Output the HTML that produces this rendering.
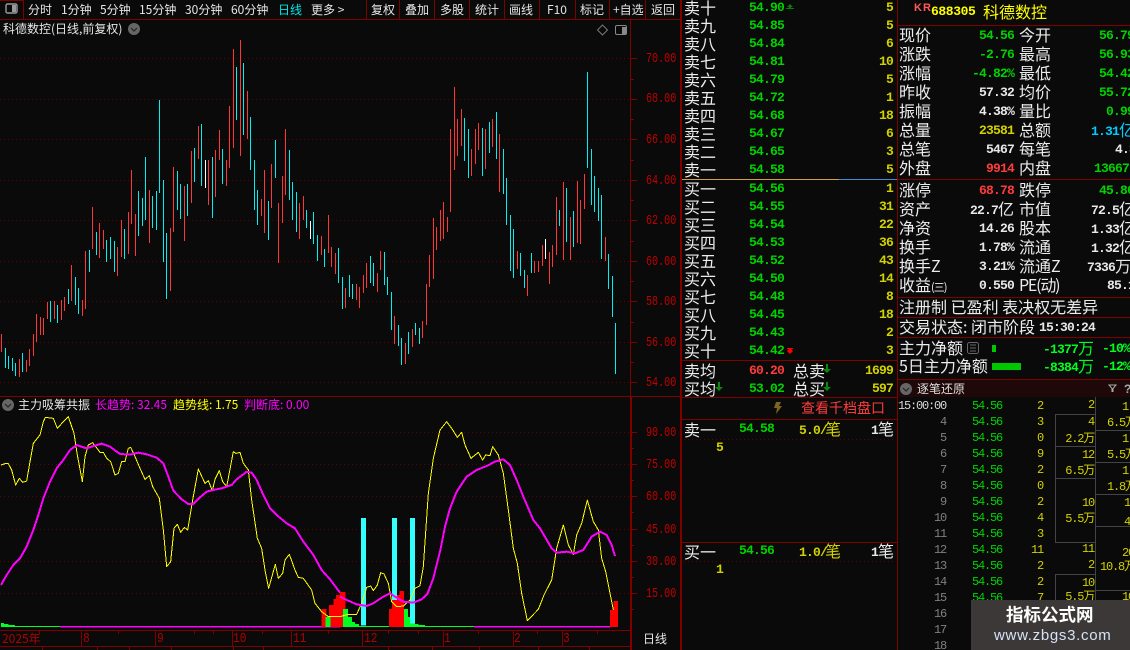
<!DOCTYPE html>
<html><head><meta charset="utf-8"><style>
html,body{margin:0;padding:0;background:#0a0a0a;width:1130px;height:650px;overflow:hidden}
#p{position:relative;width:1130px;height:650px;overflow:hidden;background:#0a0a0a;font-family:"WenQuanYi Zen Hei","Noto Sans CJK SC",sans-serif;color:#e8e8e8}
#p>svg{position:absolute;left:0;top:0}
.a{position:absolute;white-space:nowrap}
.tb{position:absolute;top:2px;font-size:12px;line-height:16px;color:#e6e6e6;white-space:nowrap}
.ax{position:absolute;left:646px;font:14px/14px "Liberation Mono",monospace;transform:scaleX(.72);transform-origin:left;color:#c00000}
.dt{position:absolute;top:632px;font:14px/15px "Liberation Mono",monospace;transform:scaleX(.8);transform-origin:left;color:#b00000}
.col{position:absolute;white-space:nowrap}
.l16{font-size:16px;line-height:18px;color:#ececec;margin-top:-1px}
.num{font:bold 13px/18px "Liberation Mono",monospace;letter-spacing:-.8px}
.c{position:absolute;font-size:16px;line-height:19px;color:#ececec;white-space:nowrap;margin-top:-1px}
.v{position:absolute;font:bold 13px/19px "Liberation Mono","WenQuanYi Zen Hei",monospace;letter-spacing:-.8px;color:#e8e8e8;white-space:nowrap}
.z{font:16px/16px "WenQuanYi Zen Hei","Noto Sans CJK SC",sans-serif;letter-spacing:0;vertical-align:-1px}
.g{color:#00d200}.y{color:#d2d200}.r{color:#ff3c3c}.w{color:#e8e8e8}.b{color:#00ccff}
.m{position:absolute;font:12px/16px "Liberation Mono","WenQuanYi Zen Hei",monospace;letter-spacing:-1.2px;white-space:nowrap;color:#d2d200}
</style></head><body><div id="p">
<svg width="1130" height="650" shape-rendering="crispEdges">
<!-- toolbar -->
<g fill="none" stroke="#800000">
<path d="M0 19.5H680M23.5 0V19M366.5 0V19M399.5 0V19M434.5 0V19M469.5 0V19M504.5 0V19M539.5 0V19M575.5 0V19M609.5 0V19M645.5 0V19"/>
<path d="M0 .5H23"/>
<path d="M0 396.5H680M630.5 19V650M631.5 396V650M0 630.5H630M0 646.5H630"/>
<path d="M632 396.5H680M680.5 0V650M681.5 0V650M897.5 0V650M682 360.5H897M682 397.5H897M682 419.5H897M682 542.5H897M898 25.5H1130M898 179.5H1130M898 297.5H1130M898 317.5H1130M898 337.5H1130M898 379.5H1130"/>
<path d="M631 58.5H637M631 99.5H637M631 139.5H637M631 180.5H637M631 220.5H637M631 261.5H637M631 301.5H637M631 342.5H637M631 382.5H637M631 79.5H634M631 119.5H634M631 160.5H634M631 200.5H634M631 241.5H634M631 281.5H634M631 322.5H634M631 362.5H634"/>
<path d="M631 432.5H637M631 464.5H637M631 496.5H637M631 529.5H637M631 561.5H637M631 593.5H637M631 448.5H634M631 480.5H634M631 512.5H634M631 545.5H634M631 577.5H634M631 609.5H634"/>
<path d="M81.5 630V646M155.5 630V646M232.5 630V646M291.5 630V646M362.5 630V646M443.5 630V646M513.5 630V646M562.5 630V646M39.5 630V634M118.5 630V634M194.5 630V634M213.5 630V634M262.5 630V634M328.5 630V634M388.5 630V634M418.5 630V634M478.5 630V634M537.5 630V634M597.5 630V634M42.5 646V650M97.5 646V650M129.5 646V650M171.5 646V650M233.5 646V650M263.5 646V650M388.5 646V650M432.5 646V650M479.5 646V650M538.5 646V650M589.5 646V650"/>
</g>
<rect x="898" y="380" width="232" height="17" fill="#1e0808"/>
<!-- grid -->
<g stroke="#620000" stroke-dasharray="1 3" fill="none">
<path d="M0 58.5H630M0 99.5H630M0 139.5H630M0 180.5H630M0 220.5H630M0 261.5H630M0 301.5H630M0 342.5H630M0 382.5H630"/>
<path d="M0 432.5H630M0 464.5H630M0 496.5H630M0 529.5H630M0 561.5H630M0 593.5H630"/>
<path d="M684 439.5H895M684 561.5H895"/>
</g>
<!-- candles -->
<path fill="none" stroke="#ff3636" d="M1.5 334V352M19.5 359V377M26.5 360V372M29.5 349V366M33.5 334V356M36.5 314V342M40.5 317V335M43.5 318V335M47.5 302V319M54.5 301V319M61.5 300V320M64.5 297V311M71.5 265V301M82.5 300V316M85.5 251V309M92.5 207V249M99.5 223V258M103.5 230V249M117.5 247V276M121.5 220V257M128.5 212V254M131.5 170V224M135.5 214V256M149.5 190V243M170.5 228V291M173.5 167V232M184.5 186V241M191.5 151V203M198.5 126V159M208.5 160V205M215.5 150V197M219.5 130V160M226.5 160V186M229.5 106V168M233.5 49V148M240.5 40V156M247.5 91V139M261.5 199V216M264.5 170V233M271.5 164V208M278.5 203V263M282.5 176V223M285.5 129V195M299.5 203V239M303.5 196V220M321.5 236V255M328.5 215V253M331.5 247V267M335.5 253V274M345.5 288V308M356.5 284V300M359.5 287V308M363.5 275V293M366.5 263V288M377.5 273V292M380.5 251V270M394.5 316V344M405.5 343V364M412.5 329V347M422.5 321V338M426.5 284V325M429.5 255V287M433.5 218V279M436.5 227V250M440.5 210V241M443.5 202V239M447.5 217V232M450.5 129V212M454.5 87V170M457.5 119V156M461.5 109V146M471.5 149V176M475.5 129V164M478.5 123V150M485.5 129V169M492.5 119V147M499.5 134V192M517.5 251V269M527.5 275V296M534.5 261V273M538.5 261V272M542.5 245V266M549.5 252V284M552.5 245V267M556.5 197V255M563.5 182V260M570.5 217V260M577.5 181V243M580.5 200V244M584.5 174V209M605.5 237V261"/>
<path fill="none" stroke="#00f0f0" d="M5.5 348V368M8.5 356V369M12.5 358V371M15.5 363V376M22.5 353V372M50.5 301V322M57.5 305V323M68.5 289V304M75.5 277V305M78.5 288V314M89.5 250V272M96.5 232V255M106.5 240V262M110.5 237V259M114.5 241V272M124.5 229V259M138.5 191V236M142.5 198V226M145.5 157V220M152.5 196V228M156.5 191V230M159.5 100V193M163.5 180V262M166.5 233V299M177.5 171V210M180.5 184V219M187.5 184V216M194.5 148V182M201.5 124V186M212.5 157V218M222.5 149V184M236.5 67V120M243.5 63V135M250.5 117V170M254.5 160V210M257.5 190V225M268.5 201V240M275.5 140V178M289.5 150V200M292.5 182V220M296.5 192V232M306.5 210V228M313.5 212V244M317.5 235V261M324.5 249V267M338.5 248V283M342.5 277V309M349.5 275V297M352.5 284V299M370.5 256V283M373.5 263V286M384.5 252V285M387.5 277V295M391.5 292V330M398.5 325V346M401.5 338V365M408.5 332V354M415.5 323V335M419.5 328V344M464.5 118V161M468.5 129V178M482.5 128V176M489.5 122V153M496.5 112V159M503.5 149V194M506.5 178V225M510.5 215V271M513.5 229V278M520.5 253V276M524.5 270V288M531.5 253V273M559.5 210V226M566.5 188V242M573.5 211V247M587.5 72V168M591.5 149V205M594.5 176V212M598.5 188V221M601.5 195V259M608.5 254V289M612.5 276V317M615.5 323V374"/>
<path fill="none" stroke="#fff" d="M205.5 160V188M310.5 221V239M545.5 239V259"/>
<!-- lower bars -->
<g transform="translate(0,420) scale(.33333)">
<rect x="3" y="609" width="9" height="12" fill="#00ff20"/><rect x="12" y="612" width="13" height="9" fill="#00ff20"/><rect x="25" y="615" width="20" height="6" fill="#00ff20"/><rect x="45" y="618" width="135" height="3" fill="#00ff20"/>
<rect x="180" y="618" width="840" height="4" fill="#ff00ff"/>
<rect x="965" y="567" width="15" height="54" fill="#f00"/><rect x="987" y="555" width="13" height="66" fill="#f00"/><rect x="1000" y="537" width="8" height="84" fill="#f00"/><rect x="1008" y="525" width="12" height="96" fill="#f00"/><rect x="977" y="591" width="15" height="30" fill="#00ff20"/>
</g>
<g transform="translate(340,420) scale(.33333)">
<rect x="0" y="618" width="402" height="3" fill="#00ff20"/><rect x="402" y="618" width="408" height="4" fill="#ff00ff"/>
<rect x="0" y="516" width="16" height="105" fill="#f00"/>
<rect x="9" y="567" width="15" height="54" fill="#00ff20"/><rect x="24" y="591" width="12" height="30" fill="#00ff20"/><rect x="36" y="606" width="9" height="15" fill="#00ff20"/><rect x="45" y="612" width="12" height="9" fill="#00ff20"/>
<rect x="190" y="567" width="14" height="54" fill="#00ff20"/><rect x="204" y="591" width="10" height="30" fill="#00ff20"/><rect x="214" y="603" width="11" height="18" fill="#00ff20"/><rect x="225" y="612" width="11" height="9" fill="#00ff20"/><rect x="236" y="615" width="19" height="6" fill="#00ff20"/>
<rect x="147" y="567" width="11" height="54" fill="#f00"/><rect x="156" y="540" width="12" height="81" fill="#f00"/><rect x="168" y="525" width="10" height="96" fill="#f00"/><rect x="178" y="513" width="14" height="108" fill="#f00"/>
<rect x="810" y="570" width="10" height="51" fill="#f00"/><rect x="820" y="543" width="14" height="78" fill="#f00"/>
<rect x="63" y="294" width="15" height="322" fill="#33ffff"/><rect x="156" y="294" width="15" height="246" fill="#33ffff"/><rect x="210" y="294" width="15" height="316" fill="#33ffff"/>
</g>
<g fill="none" stroke-linejoin="round">
<g transform="translate(0,420) scale(.33333)">
<polyline stroke="#ffff00" stroke-width="3" points="3,135 15,131 25,131 35,150 47,195 58,175 68,187 80,183 90,125 100,70 120,45 130,5 136,-8 160,-5 172,25 190,5 205,-10 222,40 232,105 247,185 255,110 265,75 278,68 300,97 310,97 320,115 332,125 345,165 355,160 365,125 375,125 385,85 392,82 403,105 420,145 435,178 448,167 458,200 478,235 490,330 500,440 512,425 522,325 532,313 542,337 553,322 563,330 578,240 595,147 615,190 625,182 637,212 645,178 658,152 668,185 680,200 700,95 708,100 720,97 730,130 745,150 755,240 772,355 785,385 795,450 806,505 826,433 835,475 848,460 855,420 868,403 885,450 895,472 910,475 935,510 945,550 965,575 985,590 1020,590"/>
<polyline stroke="#ff00ff" stroke-width="6" points="3,495 20,465 40,435 60,415 80,380 100,330 115,285 130,235 150,185 170,145 190,120 210,90 230,75 260,85 280,78 305,71 330,80 360,102 390,104 415,98 440,103 470,113 490,130 505,170 520,212 545,238 565,252 580,252 600,232 620,215 640,210 665,205 695,195 710,178 740,155 755,158 770,180 790,225 810,265 830,285 860,310 885,325 910,365 940,405 965,450 990,478 1020,518"/>
</g>
<g transform="translate(340,420) scale(.33333)">
<polyline stroke="#ffff00" stroke-width="3" points="0,590 25,583 50,583 65,550 80,502 92,498 100,512 112,495 122,458 132,462 145,490 155,545 170,560 190,558 210,540 225,505 240,497 250,440 265,220 280,115 300,30 320,5 335,25 352,52 365,37 375,75 393,115 415,97 428,120 437,105 450,107 458,80 475,105 490,160 505,270 520,385 532,430 545,520 562,602 595,568 612,525 635,480 650,385 670,315 685,375 700,403 710,345 725,310 742,240 760,305 775,330 785,415 797,455 820,570"/>
<polyline stroke="#ff00ff" stroke-width="6" points="0,530 20,540 50,553 80,558 100,550 130,530 150,520 165,530 190,545 220,548 245,538 262,522 280,475 300,395 315,320 330,265 350,215 380,170 410,150 440,138 465,125 490,118 510,135 530,180 550,230 580,300 600,325 635,385 650,398 680,395 705,400 730,390 755,350 780,335 800,345 815,375 825,408"/>
</g>
</g>
<!-- icons -->
<rect x="6" y="4" width="11" height="9" rx="1.5" fill="none" stroke="#999" stroke-width="1.4" shape-rendering="auto"/><rect x="12" y="5" width="4" height="7" fill="#999"/>
<rect x="615.5" y="25.5" width="11" height="9" rx="1.5" fill="none" stroke="#888" shape-rendering="auto"/><rect x="622" y="27" width="4" height="7" fill="#888"/>
<path d="M602.5 25L607.5 30L602.5 35L597.5 30Z" fill="none" stroke="#777" shape-rendering="auto"/>
<g shape-rendering="auto">
<circle cx="134" cy="29" r="6" fill="#666"/><path d="M131 28l3 3 3-3" fill="none" stroke="#222" stroke-width="1.2"/>
<circle cx="8" cy="405" r="6" fill="#666"/><path d="M5 404l3 3 3-3" fill="none" stroke="#222" stroke-width="1.2"/>
<circle cx="906" cy="389" r="6" fill="#666"/><path d="M903 388l3 3 3-3" fill="none" stroke="#222" stroke-width="1.2"/>
<path d="M776 402h5l-2 4h3l-6 8 1-6h-3z" fill="#7a6620"/>
<path d="M787 7l3-3 3 3h-2v1h3v1h-8v-1h3v-1zM786 9h8" fill="#0a7a0a"/>
<path d="M787 348h6v1h-2l2 2-3 3-3-3 2-2h-2z" fill="#f00"/>
<path d="M826 364v5h-3l4 4 4-4h-3v-5zM826 382v5h-3l4 4 4-4h-3v-5zM718 382v5h-3l4 4 4-4h-3v-5z" fill="#0a8a0a"/>
<path d="M1109 385h7l-3 3.500v3h-1v-3z" fill="none" stroke="#aaa"/>
<rect x="967.5" y="342.5" width="11" height="11" rx="2" fill="none" stroke="#666"/><path d="M970 345h6M970 348h6M970 351h6" stroke="#666"/>
</g>
<rect x="992" y="345" width="4" height="7" fill="#00c800"/>
<rect x="992" y="363" width="29" height="7" fill="#00c800"/>
<path d="M682 179.5H839" stroke="#d0a040"/><path d="M839 179.5H897" stroke="#4488cc"/>
<!-- tick table lines -->
<g fill="none" stroke="#444">
<path d="M1095.5 397V600M1055 414.5H1095M1055 446.5H1095M1055 478.5H1095M1055 542.5H1095M1055 574.5H1095M1055.5 414V542M1055.5 574V600M1095 430.5H1130M1095 462.5H1130M1095 494.5H1130M1095 526.5H1130M1095 590.5H1130"/>
</g>
</svg>

<!-- toolbar text -->
<span class="tb" style="left:28px">分时</span><span class="tb" style="left:61px">1分钟</span><span class="tb" style="left:100px">5分钟</span><span class="tb" style="left:139px">15分钟</span><span class="tb" style="left:185px">30分钟</span><span class="tb" style="left:231px">60分钟</span><span class="tb" style="left:278px;color:#00e6e6">日线</span><span class="tb" style="left:311px">更多 &gt;</span>
<span class="tb" style="left:371px">复权</span><span class="tb" style="left:405px">叠加</span><span class="tb" style="left:440px">多股</span><span class="tb" style="left:475px">统计</span><span class="tb" style="left:509px">画线</span><span class="tb" style="left:547px">F10</span><span class="tb" style="left:580px">标记</span><span class="tb" style="left:613px">+自选</span><span class="tb" style="left:651px">返回</span>
<span class="tb" style="left:3px;top:21px">科德数控(日线,前复权)</span>

<span class="ax" style="top:52px">70.00</span><span class="ax" style="top:92px">68.00</span><span class="ax" style="top:133px">66.00</span><span class="ax" style="top:174px">64.00</span><span class="ax" style="top:214px">62.00</span><span class="ax" style="top:255px">60.00</span><span class="ax" style="top:295px">58.00</span><span class="ax" style="top:336px">56.00</span><span class="ax" style="top:376px">54.00</span>
<span class="ax" style="top:426px">90.00</span><span class="ax" style="top:458px">75.00</span><span class="ax" style="top:490px">60.00</span><span class="ax" style="top:523px">45.00</span><span class="ax" style="top:555px">30.00</span><span class="ax" style="top:587px">15.00</span>

<span class="tb" style="left:18px;top:397px">主力吸筹共振</span>
<span class="tb" style="left:95px;top:397px;color:#ff00ff">长趋势: 32.45</span>
<span class="tb" style="left:173px;top:397px;color:#ffff00">趋势线: 1.75</span>
<span class="tb" style="left:244px;top:397px;color:#ff00ff">判断底: 0.00</span>

<span class="tb" style="left:2px;top:631px;color:#b00000">2025年</span>
<span class="dt" style="left:83px">8</span><span class="dt" style="left:157px">9</span><span class="dt" style="left:233px">10</span><span class="dt" style="left:293px">11</span><span class="dt" style="left:364px">12</span><span class="dt" style="left:444px">1</span><span class="dt" style="left:514px">2</span><span class="dt" style="left:563px">3</span>
<span class="tb" style="left:643px;top:631px">日线</span>

<!-- order book -->
<div class="col l16" style="left:684px;top:-1px">卖十<br>卖九<br>卖八<br>卖七<br>卖六<br>卖五<br>卖四<br>卖三<br>卖二<br>卖一</div>
<div class="col num g" style="left:749px;top:-1px">54.90<br>54.85<br>54.84<br>54.81<br>54.79<br>54.72<br>54.68<br>54.67<br>54.65<br>54.58</div>
<div class="col num y" style="right:237px;top:-1px;text-align:right">5<br>5<br>6<br>10<br>5<br>1<br>18<br>6<br>3<br>5</div>
<div class="col l16" style="left:684px;top:180px">买一<br>买二<br>买三<br>买四<br>买五<br>买六<br>买七<br>买八<br>买九<br>买十</div>
<div class="col num g" style="left:749px;top:180px">54.56<br>54.55<br>54.54<br>54.53<br>54.52<br>54.50<br>54.48<br>54.45<br>54.43<br>54.42</div>
<div class="col num y" style="right:237px;top:180px;text-align:right">1<br>31<br>22<br>36<br>43<br>14<br>8<br>18<br>2<br>3</div>
<div class="col l16" style="left:684px;top:362px">卖均<br>买均</div>
<div class="col num" style="left:749px;top:362px"><span class="r">60.20</span><br><span class="g">53.02</span></div>
<div class="col l16" style="left:793px;top:362px">总卖<br>总买</div>
<div class="col num y" style="right:237px;top:362px;text-align:right">1699<br>597</div>
<span class="a" style="left:801px;top:400px;font-size:14px;line-height:17px;color:#ff3c3c">查看千档盘口</span>

<span class="a l16" style="left:684px;top:421px">卖一</span>
<span class="a num g" style="left:739px;top:420px">54.58</span>
<span class="a num y" style="left:799px;top:420px">5.0/<span class="z" style="margin-left:-2px">笔</span></span>
<span class="a num w" style="left:871px;top:420px">1<span class="z">笔</span></span>
<span class="a num y" style="left:716px;top:439px">5</span>
<span class="a l16" style="left:684px;top:543px">买一</span>
<span class="a num g" style="left:739px;top:542px">54.56</span>
<span class="a num y" style="left:799px;top:542px">1.0/<span class="z" style="margin-left:-2px">笔</span></span>
<span class="a num w" style="left:871px;top:542px">1<span class="z">笔</span></span>
<span class="a num y" style="left:716px;top:561px">1</span>

<!-- header -->
<span class="a" style="left:914px;top:1px;font:bold 11px/14px 'Liberation Sans',sans-serif;color:#ff5a5a;letter-spacing:1px">KR</span>
<span class="a num" style="left:931px;top:3px;color:#ffff00;letter-spacing:-.4px">688305</span>
<span class="a" style="left:983px;top:2px;font-size:16px;line-height:18px;color:#ffff00">科德数控</span>

<!-- stats -->
<span class="c" style="left:899px;top:26px">现价</span><span class="v g" style="right:116px;top:26px">54.56</span><span class="c" style="left:1019px;top:26px">今开</span><span class="v g" style="right:-4px;top:26px">56.79</span>
<span class="c" style="left:899px;top:45px">涨跌</span><span class="v g" style="right:116px;top:45px">-2.76</span><span class="c" style="left:1019px;top:45px">最高</span><span class="v g" style="right:-4px;top:45px">56.93</span>
<span class="c" style="left:899px;top:64px">涨幅</span><span class="v g" style="right:116px;top:64px">-4.82%</span><span class="c" style="left:1019px;top:64px">最低</span><span class="v g" style="right:-4px;top:64px">54.42</span>
<span class="c" style="left:899px;top:83px">昨收</span><span class="v" style="right:116px;top:83px">57.32</span><span class="c" style="left:1019px;top:83px">均价</span><span class="v g" style="right:-4px;top:83px">55.72</span>
<span class="c" style="left:899px;top:102px">振幅</span><span class="v" style="right:116px;top:102px">4.38%</span><span class="c" style="left:1019px;top:102px">量比</span><span class="v g" style="right:-4px;top:102px">0.99</span>
<span class="c" style="left:899px;top:121px">总量</span><span class="v y" style="right:116px;top:121px">23581</span><span class="c" style="left:1019px;top:121px">总额</span><span class="v b" style="left:1091px;top:121px">1.31<span class="z">亿</span></span>
<span class="c" style="left:899px;top:140px">总笔</span><span class="v" style="right:116px;top:140px">5467</span><span class="c" style="left:1019px;top:140px">每笔</span><span class="v" style="left:1115px;top:140px">4.3</span>
<span class="c" style="left:899px;top:159px">外盘</span><span class="v r" style="right:116px;top:159px">9914</span><span class="c" style="left:1019px;top:159px">内盘</span><span class="v g" style="left:1094px;top:159px">13667</span>
<span class="c" style="left:899px;top:181px">涨停</span><span class="v r" style="right:116px;top:181px">68.78</span><span class="c" style="left:1019px;top:181px">跌停</span><span class="v g" style="left:1099px;top:181px">45.86</span>

<span class="c" style="left:899px;top:200px">资产</span><span class="v" style="left:970px;top:200px">22.7<span class="z">亿</span></span><span class="c" style="left:1019px;top:200px">市值</span><span class="v" style="left:1091px;top:200px">72.5<span class="z">亿</span></span>
<span class="c" style="left:899px;top:219px">净资</span><span class="v" style="right:116px;top:219px">14.26</span><span class="c" style="left:1019px;top:219px">股本</span><span class="v" style="left:1091px;top:219px">1.33<span class="z">亿</span></span>
<span class="c" style="left:899px;top:238px">换手</span><span class="v" style="right:116px;top:238px">1.78%</span><span class="c" style="left:1019px;top:238px">流通</span><span class="v" style="left:1091px;top:238px">1.32<span class="z">亿</span></span>
<span class="c" style="left:899px;top:257px">换手Z</span><span class="v" style="right:116px;top:257px">3.21%</span><span class="c" style="left:1019px;top:257px">流通Z</span><span class="v" style="left:1087px;top:257px">7336<span class="z">万</span></span>
<span class="c" style="left:899px;top:276px">收益<span style="font-size:11px;letter-spacing:-1px">(三)</span></span><span class="v" style="right:116px;top:276px">0.550</span><span class="c" style="left:1019px;top:276px;letter-spacing:-1.200px">PE(动)</span><span class="v" style="left:1107px;top:276px">85.1</span>
<span class="c" style="left:899px;top:298px">注册制 已盈利 表决权无差异</span>
<span class="c" style="left:899px;top:318px">交易状态: 闭市阶段</span><span class="v" style="left:1039px;top:318px">15:30:24</span>
<span class="c" style="left:899px;top:339px">主力净额</span><span class="v" style="left:1043px;top:339px;color:#00ff20">-1377<span class="z">万</span></span><span class="v" style="left:1102px;top:339px;color:#00ff20">-10%</span>
<span class="c" style="left:899px;top:357px">5日主力净额</span><span class="v" style="left:1043px;top:357px;color:#00ff20">-8384<span class="z">万</span></span><span class="v" style="left:1102px;top:357px;color:#00ff20">-12%</span>
<span class="a" style="left:917px;top:381px;font-size:12px;line-height:16px;color:#e0e0e0">逐笔还原</span>
<span class="a" style="left:1124px;top:381px;font:bold 12px/16px 'Liberation Sans',sans-serif;color:#aaa">?</span>

<!-- tick table -->
<div class="m" style="right:184px;top:398px;text-align:right;color:#808080"><span style="color:#d8d8d8">15:00:00</span><br>4<br>5<br>6<br>7<br>8<br>9<br>10<br>11<br>12<br>13<br>14<br>15<br>16<br>17<br>18</div>
<div class="m" style="left:972px;top:398px;color:#00d200">54.56<br>54.56<br>54.56<br>54.56<br>54.56<br>54.56<br>54.56<br>54.56<br>54.56<br>54.56<br>54.56<br>54.56<br>54.56</div>
<div class="m" style="right:87px;top:398px;text-align:right">2<br>3<br>0<br>9<br>2<br>0<br>2<br>4<br>3<br>11<br>2<br>2<br>7</div>
<span class="m" style="right:36px;top:397px">2</span><span class="m" style="right:36px;top:414px">4</span><span class="m" style="right:36px;top:431px">2.2万</span><span class="m" style="right:36px;top:447px">12</span><span class="m" style="right:36px;top:463px">6.5万</span><span class="m" style="right:36px;top:495px">10</span><span class="m" style="right:36px;top:511px">5.5万</span><span class="m" style="right:36px;top:541px">11</span><span class="m" style="right:36px;top:557px">2</span><span class="m" style="right:36px;top:575px">10</span><span class="m" style="right:36px;top:589px">5.5万</span>
<span class="m" style="left:1122px;top:399px">1</span><span class="m" style="left:1107px;top:415px">6.5万</span><span class="m" style="left:1122px;top:431px">1</span><span class="m" style="left:1107px;top:447px">5.5万</span><span class="m" style="left:1122px;top:463px">1</span><span class="m" style="left:1107px;top:479px">1.8万</span><span class="m" style="left:1124px;top:495px">1</span><span class="m" style="left:1124px;top:514px">4</span><span class="m" style="left:1122px;top:545px">20</span><span class="m" style="left:1100px;top:559px">10.8万</span><span class="m" style="left:1122px;top:589px">10</span>

<!-- watermark -->
<div class="a" style="left:971px;top:600px;width:159px;height:50px;background:#3d3838"></div>
<span class="a" style="left:1006px;top:605px;font:bold 17.5px/20px 'Noto Sans CJK SC','WenQuanYi Zen Hei',sans-serif;color:#fff">指标公式网</span>
<span class="a" style="left:994px;top:627px;font:15px/18px 'Liberation Sans',sans-serif;color:#d4e4f6;letter-spacing:.7px">www.zbgs3.com</span>
</div></body></html>
